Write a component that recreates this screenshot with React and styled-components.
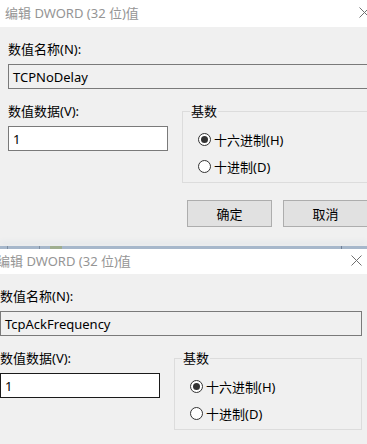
import React from "react";
import styled, { createGlobalStyle } from "styled-components";

const GlobalStyle = createGlobalStyle`
  html, body {
    margin: 0;
    padding: 0;
    background: #f0f0f0;
  }
  body {
    font-family: "Noto Sans", "Noto Sans CJK SC", sans-serif;
    font-size: 13px;
    color: #000;
  }
`;

const Screen = styled.div`
  width: 367px;
  height: 444px;
  overflow: hidden;
  background: #f0f0f0;
`;

const Window = styled.div`
  width: 378px;
  margin-left: ${(p) => p.$shift || 0}px;
  background: #f0f0f0;
`;

const TitleBar = styled.div`
  height: ${(p) => p.$height}px;
  box-sizing: border-box;
  background: #fff;
  display: flex;
  align-items: center;
  justify-content: space-between;
  padding: 0 8px 2px 5px;
  color: #959595;
  font-size: 13px;
  white-space: nowrap;
`;

const Body = styled.div`
  padding: 14px 8px 19px;
`;

const Label = styled.div`
  height: 16px;
  line-height: 16px;
  white-space: nowrap;
`;

const TextBox = styled.div`
  margin-top: 7px;
  height: 25px;
  box-sizing: border-box;
  border: 1px solid ${(p) => (p.$focused ? "#1a1a1a" : "#7a7a7a")};
  background: ${(p) => (p.$readOnly ? "#f0f0f0" : "#fff")};
  padding: 0 4px;
  display: flex;
  align-items: center;
  white-space: nowrap;
`;

const DataRow = styled.div`
  display: grid;
  grid-template-columns: 160px 1fr;
  column-gap: 14px;
  margin-top: 14px;
  align-items: start;
`;

const Group = styled.fieldset`
  margin: 0;
  min-width: 0;
  padding: 7px 0 2px 15px;
  border: 1px solid #dcdcdc;
  legend {
    margin-left: -8px;
    padding: 0 1px;
    line-height: 16px;
  }
`;

const RadioRow = styled.div`
  height: 27px;
  display: flex;
  align-items: center;
  gap: 3px;
  white-space: nowrap;
`;

const RadioDot = styled.span`
  width: 13px;
  height: 13px;
  box-sizing: border-box;
  border: 1px solid #333;
  border-radius: 50%;
  background: #fff;
  display: flex;
  align-items: center;
  justify-content: center;
  &::after {
    content: "";
    width: 7px;
    height: 7px;
    border-radius: 50%;
    background: ${(p) => (p.$checked ? "#333" : "transparent")};
  }
`;

const ButtonRow = styled.div`
  display: flex;
  justify-content: flex-end;
  gap: 11px;
  margin-top: 17px;
  padding-right: 2px;
`;

const Button = styled.button`
  width: 85px;
  height: 27px;
  padding: 0;
  border: 1px solid #adadad;
  background: #e1e1e1;
  font: inherit;
  color: #000;
`;

const Divider = styled.div`
  height: 3px;
  background: linear-gradient(
    to right,
    #a6b7cb 0,
    #a6b7cb 7px,
    #7d8ea3 7px,
    #7d8ea3 8px,
    #a6b7cb 8px,
    #a6b7cb 39px,
    #7d8ea3 39px,
    #7d8ea3 40px,
    #a6b7cb 40px,
    #a6b7cb 50px,
    #9fae90 50px,
    #9fae90 62px,
    #a6b7cb 62px,
    #a6b7cb 341px,
    #6f8096 341px,
    #6f8096 342px,
    #a6b7cb 342px
  );
  box-shadow: 0 -4px 5px rgba(180, 195, 215, 0.25);
`;

const CloseIcon = () => (
  <svg width="11" height="11" viewBox="0 0 11 11">
    <path d="M0.5 0.5 L10.5 10.5 M10.5 0.5 L0.5 10.5" stroke="#707070" strokeWidth="1" fill="none" />
  </svg>
);

const Radio = ({ checked, children }) => (
  <RadioRow>
    <RadioDot $checked={checked} />
    <span>{children}</span>
  </RadioRow>
);

const DwordDialog = ({ shift, titleHeight, name, focused, showButtons }) => (
  <Window $shift={shift}>
    <TitleBar $height={titleHeight}>
      <span>编辑 DWORD (32 位)值</span>
      <CloseIcon />
    </TitleBar>
    <Body>
      <Label>数值名称(N):</Label>
      <TextBox $readOnly>{name}</TextBox>
      <DataRow>
        <div>
          <Label>数值数据(V):</Label>
          <TextBox $focused={focused}>1</TextBox>
        </div>
        <Group>
          <legend>基数</legend>
          <Radio checked>十六进制(H)</Radio>
          <Radio>十进制(D)</Radio>
        </Group>
      </DataRow>
      {showButtons && (
        <ButtonRow>
          <Button>确定</Button>
          <Button>取消</Button>
        </ButtonRow>
      )}
    </Body>
  </Window>
);

const App = () => (
  <Screen>
    <GlobalStyle />
    <DwordDialog shift={0} titleHeight={27} name="TCPNoDelay" showButtons />
    <Divider />
    <DwordDialog shift={-8} titleHeight={25} name="TcpAckFrequency" focused />
  </Screen>
);

export default App;
